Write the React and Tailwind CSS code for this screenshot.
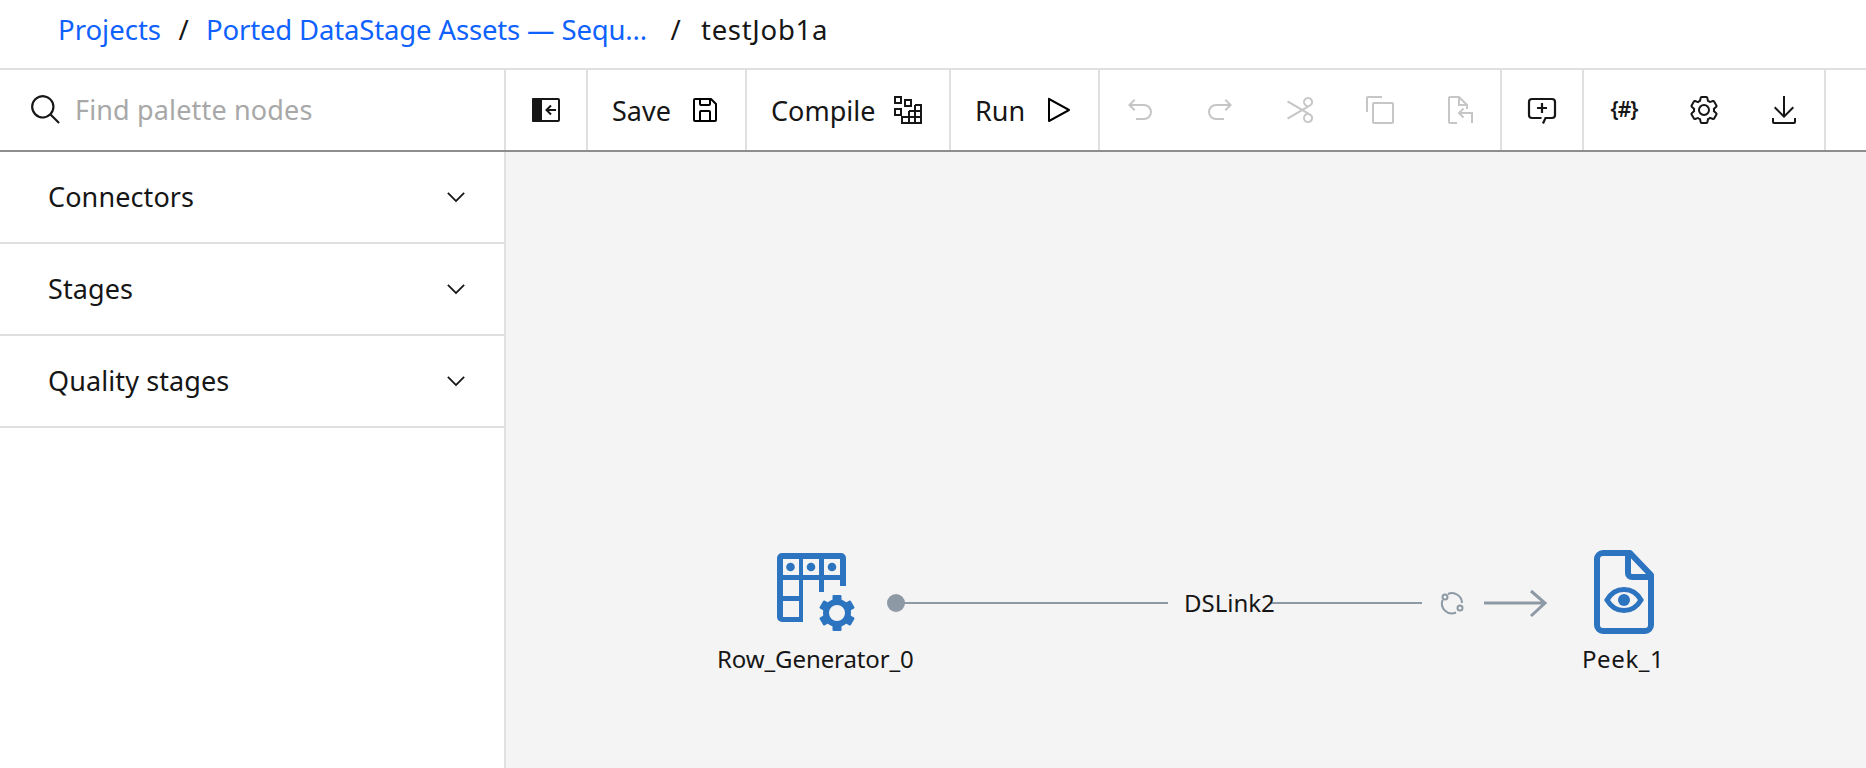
const font = { fontFamily: '"Noto Sans", "Open Sans", sans-serif' };

function Carbon({ d, size = 32, className = "" }) {
  return (
    <svg width={size} height={size} viewBox="0 0 32 32" fill="currentColor" className={className}>
      {d.map((p, i) => (
        <path key={i} d={p} />
      ))}
    </svg>
  );
}

const searchPath = ["M29 27.5859l-7.5521-7.5521a11.0177 11.0177 0 1 0-1.4141 1.4141L27.5859 29ZM4 13a9 9 0 1 1 9 9A9.01 9.01 0 0 1 4 13Z"];
const chevronPath = ["M16 22L6 12l1.4-1.4 8.6 8.6 8.6-8.6L26 12z"];
const savePath = ["M27.71,9.29l-5-5A1,1,0,0,0,22,4H6A2,2,0,0,0,4,6V26a2,2,0,0,0,2,2H26a2,2,0,0,0,2-2V10A1,1,0,0,0,27.71,9.29ZM12,6h8v4H12Zm8,20H12V18h8Zm2,0V18a2,2,0,0,0-2-2H12a2,2,0,0,0-2,2v8H6V6h4v4a2,2,0,0,0,2,2h8a2,2,0,0,0,2-2V6.41l4,4V26Z"];
const playPath = ["M7,28a1,1,0,0,1-1-1V5a1,1,0,0,1,1.4819-.8763l20,11a1,1,0,0,1,0,1.7525l-20,11A1.0005,1.0005,0,0,1,7,28ZM8,6.6909V25.3088L24.9248,16Z"];
const undoPath = ["M20,10H7.8149l3.5874-3.5859L10,5,4,11,10,17l1.4023-1.4146L7.8179,12H20a6,6,0,0,1,0,12H12v2h8a8,8,0,0,0,0-16Z"];
const redoPath = ["M12,10H24.1851L20.5977,6.4141,22,5,28,11,22,17l-1.4023-1.4146L24.1821,12H12a6,6,0,0,0,0,12h8v2H12a8,8,0,0,1,0-16Z"];
const cutPath = ["M26.5,19.63,20.24,16l6.26-3.63a5,5,0,0,0-1.21-9.2A5.19,5.19,0,0,0,24,3a5,5,0,0,0-4.33,7.53,5,5,0,0,0,2.39,2.1l-3.82,2.21L4,6.6,3,8.34,16.24,16,3,23.68l1,1.74,14.24-8.26,3.82,2.21a5,5,0,0,0-2.39,2.1A5,5,0,0,0,24,29a5.19,5.19,0,0,0,1.29-.17,5,5,0,0,0,1.21-9.2ZM21.4,9.53a3,3,0,0,1,1.1-4.12,3,3,0,0,1,4.1,1.11,3,3,0,0,1-1.1,4.11h0A3,3,0,0,1,21.4,9.53Zm5.2,16a3,3,0,0,1-4.1,1.11,3,3,0,0,1-1.1-4.12,3,3,0,0,1,4.1-1.1h0A3,3,0,0,1,26.6,25.48Z"];
const copyPath = ["M28,10V28H10V10H28m0-2H10a2,2,0,0,0-2,2V28a2,2,0,0,0,2,2H28a2,2,0,0,0,2-2V10a2,2,0,0,0-2-2Z", "M4,18H2V4A2,2,0,0,1,4,2H18V4H4Z"];
const gearPath = [
  "M27,16.76c0-.25,0-.5,0-.76s0-.51,0-.77l1.92-1.68A2,2,0,0,0,29.3,11L26.94,7a2,2,0,0,0-1.73-1,2,2,0,0,0-.64.1l-2.43.82a11.35,11.35,0,0,0-1.31-.75l-.51-2.52a2,2,0,0,0-2-1.61H13.64a2,2,0,0,0-2,1.61l-.51,2.52a11.48,11.48,0,0,0-1.32.75L7.43,6.06A2,2,0,0,0,6.79,6,2,2,0,0,0,5.06,7L2.7,11a2,2,0,0,0,.41,2.51L5,15.24c0,.25,0,.5,0,.76s0,.51,0,.77L3.11,18.45A2,2,0,0,0,2.7,21L5.06,25a2,2,0,0,0,1.73,1,2,2,0,0,0,.64-.1l2.43-.82a11.35,11.35,0,0,0,1.31.75l.51,2.52a2,2,0,0,0,2,1.61h4.72a2,2,0,0,0,2-1.61l.51-2.52a11.48,11.48,0,0,0,1.32-.75l2.42.82a2,2,0,0,0,.64.1,2,2,0,0,0,1.73-1L29.3,21a2,2,0,0,0-.41-2.51ZM25.21,24l-3.43-1.16a8.86,8.86,0,0,1-2.71,1.57L18.36,28H13.64l-.71-3.55a9.36,9.36,0,0,1-2.7-1.57L6.79,24,4.43,20l2.72-2.4a8.9,8.9,0,0,1,0-3.13L4.43,12,6.79,8l3.43,1.16a8.86,8.86,0,0,1,2.71-1.57L13.64,4h4.72l.71,3.55a9.36,9.36,0,0,1,2.7,1.57L25.21,8,27.57,12l-2.72,2.4a8.9,8.9,0,0,1,0,3.13L27.57,20Z",
  "M16,22a6,6,0,1,1,6-6A5.94,5.94,0,0,1,16,22Zm0-10a3.91,3.91,0,0,0-4,4,3.91,3.91,0,0,0,4,4,3.91,3.91,0,0,0,4-4A3.91,3.91,0,0,0,16,12Z",
];
const downloadPath = ["M26 24v4H6v-4H4v4a2 2 0 0 0 2 2h20a2 2 0 0 0 2-2v-4zM26 14l-1.41-1.41L17 20.17V2h-2v18.17l-7.59-7.58L6 14l10 10 10-10z"];

function PanelIcon() {
  return (
    <svg width="28" height="24" viewBox="0 0 28 24">
      <rect x="1" y="1" width="26" height="22" rx="1" fill="#fff" stroke="#161616" strokeWidth="2" />
      <rect x="0" y="0" width="10" height="24" rx="1" fill="#161616" />
      <path d="M15 12h9M19 7.500L14.500 12l4.500 4.500" fill="none" stroke="#161616" strokeWidth="2" />
    </svg>
  );
}

function CompileIcon() {
  return (
    <svg width="28" height="28" viewBox="0 0 28 28" fill="none" stroke="#161616" strokeWidth="2">
      <rect x="1" y="1" width="6" height="6" />
      <rect x="11" y="4" width="6" height="6" />
      <rect x="1" y="13" width="6" height="6" />
      <path d="M21 9h6v18H8v-6h19M21 9v18M15 15h12M15 15v12" />
    </svg>
  );
}

function PasteIcon() {
  return (
    <svg width="32" height="32" viewBox="0 0 32 32" fill="none" stroke="currentColor" strokeWidth="2">
      <path d="M13 29H6a1 1 0 0 1-1-1V4a1 1 0 0 1 1-1h9l8 8v4M15 3v8h8" />
      <path d="M28 29V19H15M19.500 14.500L15 19l4.500 4.500" />
    </svg>
  );
}

function CommentIcon() {
  return (
    <svg width="32" height="32" viewBox="0 0 32 32" fill="none" stroke="#161616" strokeWidth="2.2">
      <path d="M15.500 24H6a3 3 0 0 1-3-3V8a3 3 0 0 1 3-3h20a3 3 0 0 1 3 3v13a3 3 0 0 1-3 3h-6.500l-2.500 5.500" />
      <path d="M16 9v10M11 14h10" />
    </svg>
  );
}

function RowGeneratorIcon() {
  return (
    <svg width="78" height="78" viewBox="0 0 78 78" fill="#2d74c0">
      <path
        fillRule="evenodd"
        d="M5 0H64a5 5 0 0 1 5 5V33H63V27H47V39H42V27H26V69H5a5 5 0 0 1-5-5V5a5 5 0 0 1 5-5ZM6 6v16h16V6ZM26 6v16h16V6ZM47 6v16h16V6ZM6 27v16h16V27ZM6 48v16h16V48Z"
      />
      <circle cx="13.500" cy="14" r="4.300" />
      <circle cx="34" cy="14" r="4.300" />
      <circle cx="55" cy="14" r="4.300" />
      <circle cx="60" cy="60" r="11" fill="none" stroke="#2d74c0" strokeWidth="6" />
      {[0, 60, 120, 180, 240, 300].map((a) => (
        <rect key={a} x="55.500" y="42" width="9" height="8" rx="1" transform={`rotate(${a} 60 60)`} />
      ))}
    </svg>
  );
}

function PeekIcon() {
  return (
    <svg width="60" height="84" viewBox="0 0 60 84" fill="none" stroke="#2d74c0" strokeWidth="6">
      <path d="M36 3H9a6 6 0 0 0-6 6v66a6 6 0 0 0 6 6h42a6 6 0 0 0 6-6V25Z" strokeLinejoin="round" />
      <path d="M34 3v20a4 4 0 0 0 4 4h19" />
      <path d="M13 50c8-14 26-14 34 0-8 14-26 14-34 0Z" strokeWidth="5" />
      <circle cx="30" cy="50" r="6" fill="#2d74c0" stroke="none" />
    </svg>
  );
}

function LinkLines() {
  return (
    <svg width="700" height="30" viewBox="0 0 700 30" fill="none" stroke="#8d99a5" strokeWidth="2">
      <circle cx="9" cy="15" r="9" fill="#8d99a5" stroke="none" />
      <path d="M9 15h272M384 15h151" />
      <path d="M597 15h61M644 3l14 12-14 13" strokeWidth="3" />
      <path d="M561 6A10 10 0 0 1 575 15M569 24.500A10 10 0 0 1 555.500 12" />
      <circle cx="558" cy="9" r="2.500" fill="#f4f4f4" />
      <circle cx="573" cy="20" r="2.500" fill="#f4f4f4" />
    </svg>
  );
}

function ToolGroup({ width, children }) {
  return <div className={`flex h-full items-center border-r-2 border-[#e0e0e0] ${width}`}>{children}</div>;
}

function IconSlot({ children, className = "text-[#161616]" }) {
  return <div className={`flex h-full w-20 items-center justify-center ${className}`}>{children}</div>;
}

function TextButton({ label, gap, children }) {
  return (
    <div className="flex h-full items-center pl-6">
      <span className="text-[27px] leading-none text-[#161616]">{label}</span>
      <span className={`flex items-center ${gap}`}>{children}</span>
    </div>
  );
}

function PaletteRow({ label }) {
  return (
    <div className="flex h-[92px] items-center justify-between border-b-2 border-[#e0e0e0] pl-12 pr-[34px]">
      <span className="text-[27px] tracking-[0.1px] text-[#161616]">{label}</span>
      <Carbon d={chevronPath} size={28} className="text-[#161616]" />
    </div>
  );
}

export default function App() {
  return (
    <div className="flex h-screen w-full flex-col overflow-hidden bg-white" style={font}>
      <div className="flex h-[70px] shrink-0 items-center border-b-2 border-[#e0e0e0] pb-2 pl-[58px] text-[27.500px]">
        <a className="text-[#0f62fe]">Projects</a>
        <span className="w-[45px] text-center text-[#161616]">/</span>
        <a className="w-[444px] whitespace-nowrap tracking-[-0.15px] text-[#0f62fe]">Ported DataStage Assets — Sequ...</a>
        <span className="w-[51px] text-center text-[#161616]">/</span>
        <span className="tracking-[0.7px] text-[#161616]">testJob1a</span>
      </div>

      <div className="flex h-[82px] shrink-0 border-b-2 border-[#8d8d8d]">
        <div className="flex h-full w-[506px] shrink-0 items-center border-r-2 border-[#e0e0e0] pl-[29px]">
          <Carbon d={searchPath} size={34} className="text-[#161616]" />
          <span className="ml-[12px] text-[27px] tracking-[0.15px] text-[#a8a8a8]">Find palette nodes</span>
        </div>
        <ToolGroup width="w-[82px]">
          <IconSlot>
            <PanelIcon />
          </IconSlot>
        </ToolGroup>
        <ToolGroup width="w-[159px]">
          <TextButton label="Save" gap="ml-[18px]">
            <Carbon d={savePath} />
          </TextButton>
        </ToolGroup>
        <ToolGroup width="w-[204px]">
          <TextButton label="Compile" gap="ml-[19px]">
            <CompileIcon />
          </TextButton>
        </ToolGroup>
        <ToolGroup width="w-[149px]">
          <TextButton label="Run" gap="ml-[17px]">
            <Carbon d={playPath} />
          </TextButton>
        </ToolGroup>
        <ToolGroup width="w-[402px]">
          <IconSlot className="text-[#c6c6c6]"><Carbon d={undoPath} /></IconSlot>
          <IconSlot className="text-[#c6c6c6]"><Carbon d={redoPath} /></IconSlot>
          <IconSlot className="text-[#c6c6c6]"><Carbon d={cutPath} /></IconSlot>
          <IconSlot className="text-[#c6c6c6]"><Carbon d={copyPath} /></IconSlot>
          <IconSlot className="text-[#c6c6c6]"><PasteIcon /></IconSlot>
        </ToolGroup>
        <ToolGroup width="w-[82px]">
          <IconSlot><CommentIcon /></IconSlot>
        </ToolGroup>
        <ToolGroup width="w-[242px]">
          <IconSlot>
            <span className="text-[21px] font-semibold tracking-[-1px]">{"{#}"}</span>
          </IconSlot>
          <IconSlot><Carbon d={gearPath} /></IconSlot>
          <IconSlot><Carbon d={downloadPath} /></IconSlot>
        </ToolGroup>
      </div>

      <div className="flex min-h-0 flex-1">
        <div className="w-[506px] shrink-0 border-r-2 border-[#e0e0e0]">
          <PaletteRow label="Connectors" />
          <PaletteRow label="Stages" />
          <PaletteRow label="Quality stages" />
        </div>

        <div className="relative flex-1 bg-[#f4f4f4]">
          <div className="absolute left-[271px] top-[401px]">
            <RowGeneratorIcon />
          </div>
          <span className="absolute left-[211px] top-[492px] text-[24px] leading-[30px] tracking-[-0.1px] text-[#161616]">Row_Generator_0</span>
          <div className="absolute left-[381px] top-[436px]">
            <LinkLines />
          </div>
          <span className="absolute left-[678px] top-[436px] text-[24px] leading-[30px] text-[#161616]">DSLink2</span>
          <div className="absolute left-[1088px] top-[398px]">
            <PeekIcon />
          </div>
          <span className="absolute left-[1076px] top-[492px] text-[24px] leading-[30px] tracking-[0.6px] text-[#161616]">Peek_1</span>
        </div>
      </div>
    </div>
  );
}
